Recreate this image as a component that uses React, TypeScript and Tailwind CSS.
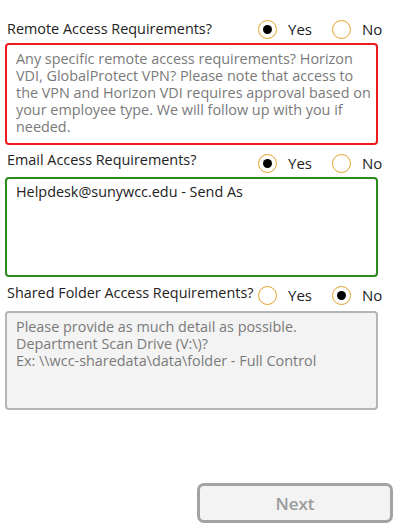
import React, { useState } from "react";

type Choice = "yes" | "no";

function Radio({ checked, label, onClick }: { checked: boolean; label: string; onClick: () => void }) {
  return (
    <button type="button" onClick={onClick} className="flex items-center">
      <span className="flex h-[19px] w-[19px] items-center justify-center rounded-full border-[1.5px] border-[#e3a22b] bg-white">
        {checked && <span className="h-[9px] w-[9px] rounded-full bg-black" />}
      </span>
      <span className="ml-[11px] text-[15px] leading-[22px] text-[#222]">{label}</span>
    </button>
  );
}

function Question({
  label,
  value,
  onChange,
  radioOffset,
}: {
  label: string;
  value: Choice;
  onChange: (v: Choice) => void;
  radioOffset: string;
}) {
  return (
    <div className="flex h-[22px] items-start">
      <div className="w-[258px] shrink-0 whitespace-nowrap pl-[7px] text-[14.4px] leading-[22px] text-[#222]">
        {label}
      </div>
      <div className={`flex gap-[20px] ${radioOffset}`}>
        <Radio checked={value === "yes"} label="Yes" onClick={() => onChange("yes")} />
        <Radio checked={value === "no"} label="No" onClick={() => onChange("no")} />
      </div>
    </div>
  );
}

export default function App() {
  const [remote, setRemote] = useState<Choice>("yes");
  const [email, setEmail] = useState<Choice>("yes");
  const [shared, setShared] = useState<Choice>("no");
  const [emailText, setEmailText] = useState("Helpdesk@sunywcc.edu - Send As");

  return (
    <div className="h-[527px] w-[400px] bg-white font-['Open_Sans',sans-serif]">
      <div className="pt-[18px]">
        <Question label="Remote Access Requirements?" value={remote} onChange={setRemote} radioOffset="pt-0" />
        <textarea
          className="mx-[5px] mt-[3px] block h-[102px] w-[373px] resize-none overflow-hidden rounded-[4px] border-2 border-[#f01a1a] py-[5px] pl-[9px] pr-[1px] text-[14.4px] leading-[17px] text-[#333] outline-none placeholder:text-[#7a7a7a]"
          placeholder="Any specific remote access requirements? Horizon VDI, GlobalProtect VPN? Please note that access to the VPN and Horizon VDI requires approval based on your employee type. We will follow up with you if needed."
        />
      </div>
      <div className="mt-[4px]">
        <Question label="Email Access Requirements?" value={email} onChange={setEmail} radioOffset="pt-[3px]" />
        <textarea
          value={emailText}
          onChange={(e) => setEmailText(e.target.value)}
          className="mx-[5px] mt-[6px] block h-[100px] w-[373px] resize-none overflow-hidden rounded-[4px] border-2 border-[#2b8a1c] py-[4px] pl-[9px] pr-[1px] text-[14.4px] leading-[17px] text-[#222] outline-none"
        />
      </div>
      <div className="mt-[5px]">
        <Question label="Shared Folder Access Requirements?" value={shared} onChange={setShared} radioOffset="pt-[2px]" />
        <textarea
          disabled
          className="mx-[5px] mt-[7px] block h-[99px] w-[373px] resize-none overflow-hidden rounded-[4px] border-2 border-[#b5b5b5] bg-[#f3f3f3] py-[5px] pl-[9px] pr-[1px] text-[14.4px] leading-[17px] outline-none placeholder:text-[#7a7a7a]"
          placeholder={"Please provide as much detail as possible.\nDepartment Scan Drive (V:\\)?\nEx: \\\\wcc-sharedata\\data\\folder - Full Control"}
        />
      </div>
      <div className="mt-[73px] flex justify-end pr-[7px]">
        <button
          type="button"
          disabled
          className="h-[40px] w-[196px] rounded-[7px] border-[3px] border-[#a3a3a3] bg-[#f3f3f3] text-[17px] font-semibold leading-none text-[#9b9b9b]"
        >
          Next
        </button>
      </div>
    </div>
  );
}
